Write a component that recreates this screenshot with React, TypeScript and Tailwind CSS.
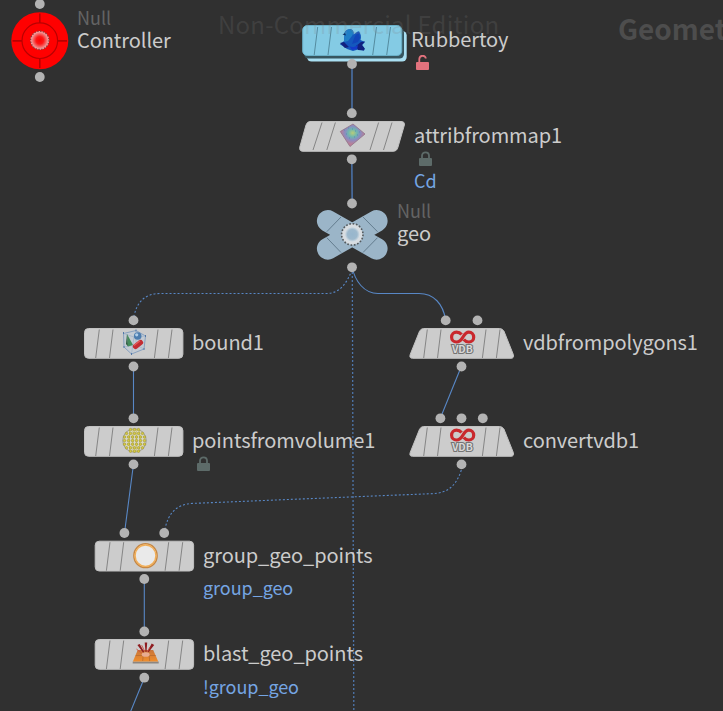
import type { ReactNode } from "react";

type Point = [number, number];

type NodeLabel = {
  name: string;
  x: number;
  y: number;
  kind?: string;
  lock?: "open" | "closed";
  attr?: string;
  attrGap?: string;
};

const labels: NodeLabel[] = [
  { kind: "Null", name: "Controller", x: 77, y: 7 },
  { name: "Rubbertoy", x: 411, y: 26, lock: "open" },
  { name: "attribfrommap1", x: 414, y: 122, lock: "closed", attr: "Cd", attrGap: "mt-[3px]" },
  { kind: "Null", name: "geo", x: 397, y: 200 },
  { name: "bound1", x: 192, y: 329 },
  { name: "vdbfrompolygons1", x: 523, y: 329 },
  { name: "pointsfromvolume1", x: 192, y: 427, lock: "closed" },
  { name: "convertvdb1", x: 523, y: 427 },
  { name: "group_geo_points", x: 203, y: 542, attr: "group_geo", attrGap: "mt-[10px]" },
  { name: "blast_geo_points", x: 203, y: 640, attr: "!group_geo", attrGap: "mt-[11px]" },
];

const ports: Point[] = [
  [39.8, 4], [39.8, 77], [352, 64], [351.8, 113.2], [351.8, 159.3], [352, 203.5], [352, 267.3],
  [133.5, 320.4], [133.5, 366.5], [133.5, 418.3], [133.5, 464.4],
  [445.7, 320.4], [477.5, 320.4], [461.5, 366.5], [440.4, 418.3], [461.5, 418.3], [482.8, 418.3], [461.5, 464.4],
  [124.4, 533], [164.2, 533], [144.3, 579], [144.3, 631.5], [144.3, 677.7],
];

function Box({ x, y, children }: { x: number; y: number; children: ReactNode }) {
  return (
    <g transform={`translate(${x} ${y})`}>
      <rect x=".5" y=".5" width="98.4" height="29.8" rx="4" fill="#cccccc" stroke="#c2c2c2" />
      <path d="M15.3 1.5L11.7 30M29 1.5L25.5 30M74 1.5L70.4 30M88 1.5L84.4 30" stroke="#858585" strokeWidth="1" />
      {children}
    </g>
  );
}

function Vdb({ y }: { y: number }) {
  return (
    <g transform={`translate(409 ${y})`}>
      <path d="M14.5 .5H90.5Q93.5 .5 95 3.3L104.3 26.5Q105.3 30.3 102 30.3H3.5Q0 30.3 1.2 26.5L10.5 3.3Q12 .5 14.5 .5Z" fill="#cccccc" stroke="#c2c2c2" />
      <path d="M18.3 1.5L14.7 30M32 1.5L28.5 30M77 1.5L73.4 30M91 1.5L87.4 30" stroke="#858585" strokeWidth="1" />
      <path
        d="M52.6 6.6C51.2 4.9 49.6 4.2 47.5 4.2C44.7 4.2 42.6 6.4 42.6 9.2C42.6 12 44.7 14 47.5 14C50.6 14 52.2 11.9 53.8 9.3C55.4 6.6 56.8 4.2 59.8 4.2C62.6 4.2 64.7 6.4 64.7 9.2C64.7 12 62.6 14 59.8 14C57.7 14 56 13 54.8 11.5"
        fill="none"
        stroke="#c9282d"
        strokeWidth="3.2"
      />
      <text x="53.4" y="24.8" textAnchor="middle" textLength="21" lengthAdjust="spacingAndGlyphs" fontSize="10" fontWeight="700" fontFamily="'Noto Sans CJK SC', sans-serif" fill="#d8d8d8" stroke="#747474" strokeWidth="2" paintOrder="stroke">
        VDB
      </text>
    </g>
  );
}

function Lock({ open }: { open: boolean }) {
  const color = open ? "#e2727d" : "#5d6b69";
  return (
    <svg className="ml-[5px] mt-1 block h-4 w-[14px]" viewBox="0 0 14 16">
      <rect x="0" y="7" width="13" height="8" rx="1" fill={color} />
      <path d={open ? "M3.3 7.5V4.3C3.3 -.4 9.8 -.2 9.8 3.6" : "M3 7.5V4.8C3 .1 10 .1 10 4.8V7.5"} fill="none" stroke={color} strokeWidth="1.8" />
    </svg>
  );
}

const volumeRows = [
  { y: 3.6, n: 3 },
  { y: 7.4, n: 5 },
  { y: 11, n: 6 },
  { y: 14.6, n: 6 },
  { y: 18.2, n: 6 },
  { y: 21.8, n: 5 },
  { y: 25.2, n: 3 },
];

function Graph() {
  return (
    <svg className="block h-full w-full" viewBox="0 0 723 711">
      <defs>
        <radialGradient id="nullRed">
          <stop offset="0" stopColor="#ff0000" />
          <stop offset=".4" stopColor="#ff1515" />
          <stop offset=".85" stopColor="#f29090" />
          <stop offset="1" stopColor="#efb0b0" />
        </radialGradient>
        <radialGradient id="map" cy=".4">
          <stop offset="0" stopColor="#b9cc78" />
          <stop offset=".35" stopColor="#6fb6b0" />
          <stop offset=".62" stopColor="#8a8cc0" />
          <stop offset="1" stopColor="#bd7f96" />
        </radialGradient>
        <radialGradient id="bluePale">
          <stop offset="0" stopColor="#97b6cd" />
          <stop offset=".65" stopColor="#9db9cd" />
          <stop offset="1" stopColor="#d7dfe5" />
        </radialGradient>
        <linearGradient id="plate" x1="0" y1="0" x2="0" y2="1">
          <stop offset="0" stopColor="#c8753a" />
          <stop offset="1" stopColor="#f08e2c" />
        </linearGradient>
      </defs>

      <g fill="none" stroke="#5887c5" strokeWidth="1.1">
        <path d="M352 64V113M351.8 159L352.2 204" stroke="#4a70a5" strokeWidth="1.6" />
        <path d="M352 267C355 281 364 293.5 378 293.5H419C434 293.5 443 304 445.7 320" />
        <path d="M133.5 366V418M133.5 464L124.5 533M461.5 366L440.4 418M144.3 579V631M144.3 678L130 713" />
        <g strokeDasharray="2 2">
          <path d="M352 270C347 282 341 293.5 326 293.5H160C145 293.5 137 302 134 316" />
          <path d="M461.3 470C457 484 449 493 433 493.6L193 503.4C176 504 168 514 165 529" />
          <path d="M352.3 272L353.8 711" stroke="#4e76ab" strokeWidth="1.3" />
        </g>
      </g>

      <g>
        <circle cx="39.8" cy="40.7" r="28.5" fill="#ff0000" />
        <circle cx="39.8" cy="40.7" r="17.8" fill="none" stroke="#b90000" strokeWidth="1.2" />
        <path d="M39.8 13.5V23M39.8 58.5V68M12.5 40.9H22M57.5 40.9H67" stroke="#b90000" strokeWidth="1.6" />
        <circle cx="39.8" cy="40.3" r="9.4" fill="url(#nullRed)" />
        <circle cx="39.8" cy="40.3" r="9.2" fill="none" stroke="#8d3838" strokeWidth="1.3" strokeDasharray="1.4 1.49" />
      </g>

      <rect x="307" y="31" width="99.7" height="30.5" rx="4.5" fill="#a9dff2" />
      <rect x="304" y="28" width="100" height="30.5" rx="4.5" fill="#36555f" />
      <rect x="302.7" y="25.5" width="99" height="30" rx="4.5" fill="#84cbe4" stroke="#6ab0c8" />
      <path d="M317.7 27L314.2 55M331.5 27L328 55M376.5 27L372.7 55M390.5 27L386.7 55" stroke="#548b9f" strokeWidth="1" />
      <path d="M344.5 33C345 30 349 28.5 351.5 29.5C353.5 30.5 354 32.5 353.5 34.5C355 33.5 356.5 31.5 359 31.2C361 34 361.5 37 360.5 40L365 42L362 45L364.7 48.5L364 50.5L358 49.5L353 51L347 49L343 46L340 44.5L344 41Z" fill="#1458bd" />
      <path d="M344.5 33C345 30 349 28.5 351.5 29.5C353.5 30.5 354 33 352 36L348 41L344 42Z" fill="#1f7fc6" />
      <path d="M345 33L342.5 34.5L346 35.5Z" fill="#0d2e63" />
      <path d="M355 36L358.5 32L360 38L358 42L352 44Z" fill="#1245b8" />
      <path d="M340 43L344 42L349 47L345 48ZM356 46L361 42L365 41.5L362 45L364.7 48.5L364 50.5L358 50Z" fill="#11217f" />
      <path d="M347 43C349 48 354 48 358 45L357 49L352 50Z" fill="#143ac9" />

      <g>
        <path d="M310 121.5H401Q405 121.5 404.4 125L398 147Q397 151.3 393 151.3H303Q299 151.3 299.8 147L306 125Q307.2 121.5 310 121.5Z" fill="#cccccc" stroke="#c2c2c2" />
        <path d="M322 122.5L313 150M335.4 122.5L326.8 150M378.6 122.5L370 150M392 122.5L383.5 150" stroke="#858585" strokeWidth="1" />
        <path d="M353 124L365 134L350 146.5L340.3 131.5Z" fill="url(#map)" stroke="#8f7288" strokeWidth=".8" />
        <path d="M344 130h1M348 128h1M346 134h1M352 129h1M355 131h1M349 138h1M354 137h1M357 135h1M359 132h1" stroke="#5b8bb3" strokeWidth="1" />
      </g>

      <g>
        <path d="M327.8 220.9L376.7 248.7M376.7 220.9L327.8 248.7" stroke="#9bb5c8" strokeWidth="21.8" strokeLinecap="round" />
        <path d="M341 217L326.8 231.7M326.8 237.7L341 252.5M363 217L377.5 231.7M377.5 237.7L363 252.5" stroke="#637c8e" strokeWidth="1" />
        <circle cx="352.3" cy="234.4" r="10.6" fill="#d8dde1" />
        <circle cx="352.3" cy="234.4" r="10.7" fill="none" stroke="#555b5f" strokeWidth="1.6" strokeDasharray="1.7 1.66" />
        <circle cx="352.3" cy="234.4" r="7.5" fill="url(#bluePale)" />
      </g>

      <Box x={84} y={328}>
        <path d="M39.5 5.5L52 2.5L61.5 8L60 21L47.5 26L40 19Z" fill="#c4cbd3" stroke="#819cbd" strokeWidth=".9" />
        <path d="M39.5 5.5L50 9L61.5 8M50 9L47.5 26M52 2.5V17M40 19L52 17L60 21" fill="none" stroke="#a2b5ca" strokeWidth=".8" />
        <path d="M43 6L49 17L44 18.5Z" fill="#448c5b" />
        <path d="M43 6L44 18.5L42 16Z" fill="#255a39" />
        <circle cx="53.7" cy="8" r="3.8" fill="#4c7daf" />
        <circle cx="52.7" cy="6.8" r="1.6" fill="#b0cee9" />
        <path d="M51.5 18.5L56.5 14.5" stroke="#c32c32" strokeWidth="5.2" strokeLinecap="round" />
        <path d="M50 17.5L56 12.8" stroke="#e35c5c" strokeWidth="1.2" />
        <path d="M39 5h1M51.5 2.5h1M61 8h1M59.5 21h1M47 26h1M39.5 19h1" stroke="#5278a7" strokeWidth="2" />
      </Box>

      <Box x={84} y={426}>
        <circle cx="50.5" cy="14.5" r="11.8" fill="#d9d8c8" stroke="#9a9a8c" strokeWidth=".9" />
        <path d="M45.5 4V25M49 3V26M52.3 3V26M55.7 4V25" stroke="#cdc466" strokeWidth="1" />
        {volumeRows.map((row) =>
          Array.from({ length: row.n }, (_, i) => (
            <circle key={`${row.y}-${i}`} cx={50.5 + (i - (row.n - 1) / 2) * 4} cy={row.y} r="1.25" fill="#d8cc3c" stroke="#9c923a" strokeWidth=".6" />
          )),
        )}
      </Box>

      <Vdb y={328} />
      <Vdb y={426} />

      <Box x={94.7} y={540.7}>
        <ellipse cx="50.8" cy="15" rx="11.6" ry="11.9" fill="#efeeec" stroke="#c58745" strokeWidth="1.5" />
        <ellipse cx="50.8" cy="15" rx="10.4" ry="10.7" fill="#eaeaea" stroke="#f1ae57" strokeWidth="1.4" />
      </Box>

      <Box x={94.7} y={639}>
        <path d="M38 22.5H64V24.5H38Z" fill="#8c8681" />
        <path d="M43 11H58.5L63.5 22.5H38.2Z" fill="url(#plate)" />
        <path d="M49 11L48 22M54 11L55 22M41 16.5H61" stroke="#b86b30" strokeWidth=".8" fill="none" />
        <ellipse cx="51" cy="15.5" rx="4" ry="2.3" fill="#e8ac91" />
        <path d="M50 3.5H52.5L51.8 13H50.8ZM42.7 6L45 5L49.5 13L48.3 13.5ZM57 4.5L59.5 6L54 13L52.8 12.5Z" fill="#8e1c20" />
        <path d="M47 6.2L49.8 12M55.3 8L52.5 13M41.7 10L47 14" stroke="#ca5144" strokeWidth=".9" />
      </Box>

      {ports.map(([x, y]) => (
        <circle key={`${x}-${y}`} cx={x} cy={y} r="4.9" fill="#b3b3b3" />
      ))}
    </svg>
  );
}

function Label({ node }: { node: NodeLabel }) {
  return (
    <div className="absolute flex flex-col whitespace-nowrap" style={{ left: node.x, top: node.y }}>
      {node.kind && <span className="text-[18px] leading-5 text-[#646464]">{node.kind}</span>}
      <span className="text-[20px] leading-[25px] tracking-[-0.08px] text-[#cccccc]">{node.name}</span>
      {node.lock && <Lock open={node.lock === "open"} />}
      {node.attr && <span className={`text-[18px] leading-5 tracking-[-0.06px] text-[#75a5e3] ${node.attrGap}`}>{node.attr}</span>}
    </div>
  );
}

export default function App() {
  return (
    <main className="relative h-[711px] w-[723px] overflow-hidden bg-[#303030] font-['Noto_Sans_CJK_SC',sans-serif]">
      <Graph />
      <header className="absolute inset-x-0 top-0 flex items-start justify-between whitespace-nowrap pl-[218px] pt-2">
        <span className="text-[24px] leading-8 tracking-[0.23px] text-[#808080]/20">Non-Commercial Edition</span>
        <span className="-mr-10 w-[145px] pt-0.5 text-[28px] font-bold leading-9 text-[#4d4d4d]">Geometry</span>
      </header>
      {labels.map((node) => (
        <Label key={node.name} node={node} />
      ))}
    </main>
  );
}
